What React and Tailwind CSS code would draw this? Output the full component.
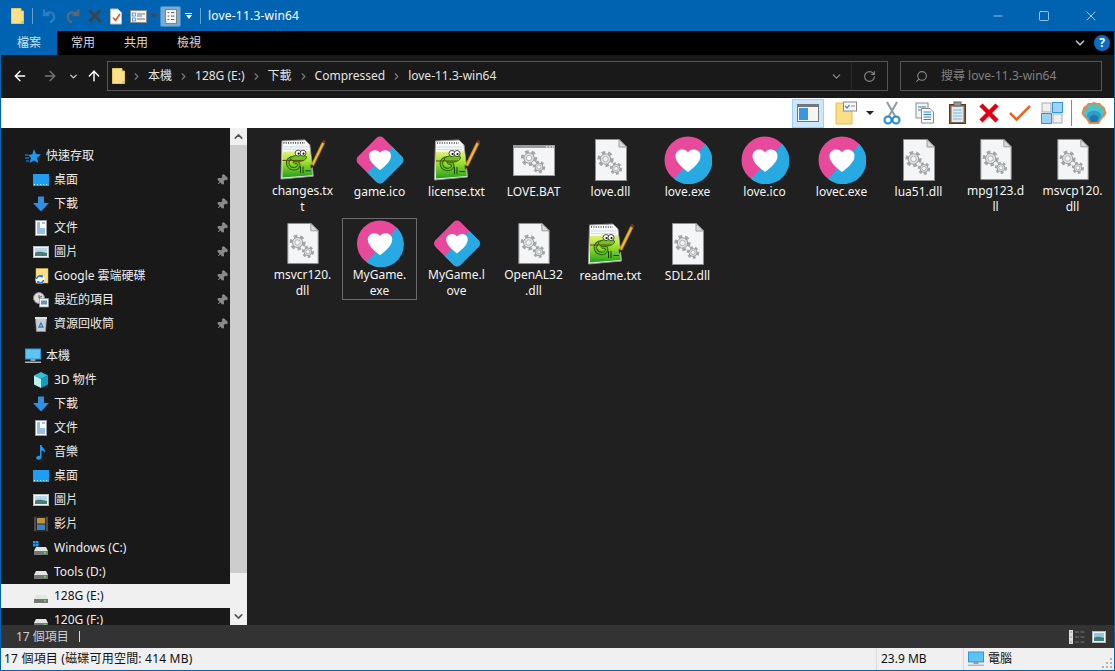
import { ArrowLeft, ArrowRight, ArrowUp, ChevronDown, ChevronRight, ChevronUp, RotateCw, Search, Minus, Square, X, Pin } from 'lucide-react';

const PINK = '#e74a9a';
const BLUE = '#27aae1';
const HEART = 'M24 36 C19 32 11.500 26.500 11.500 20 C11.500 16 14.500 13.500 18.500 13.500 C20.800 13.500 23 14.600 24 16.400 C25 14.600 27.200 13.500 29.500 13.500 C33.500 13.500 36.500 16 36.500 20 C36.500 26.500 29 32 24 36Z';

function LoveCircle() {
  return (
    <svg width="48" height="48" viewBox="0 0 48 48">
      <circle cx="24" cy="24" r="23.500" fill={PINK} />
      <path d="M41.300 8 A23.500 23.500 0 0 1 10 43 Z" fill={BLUE} />
      <path d={HEART} fill="#fff" />
    </svg>
  );
}

function LoveGem() {
  return (
    <svg width="48" height="48" viewBox="0 0 48 48">
      <g transform="rotate(45 24 24)">
        <rect x="6" y="6" width="36" height="36" rx="5" fill={PINK} />
        <path d="M24 6 H37 a5 5 0 0 1 5 5 V37 a5 5 0 0 1 -5 5 H24 Z" fill={BLUE} />
      </g>
      <path d={HEART} fill="#fff" transform="translate(24 24) scale(0.88) translate(-24 -24.500)" />
    </svg>
  );
}

function Gear({ x, y, r }) {
  return (
    <g>
      <circle cx={x} cy={y} r={r} fill="none" stroke="#a3a6a8" strokeWidth={r * 0.5} strokeDasharray={`${r * 0.55} ${r * 0.45}`} />
      <circle cx={x} cy={y} r={r * 0.8} fill="#dfe1e2" stroke="#9a9d9f" strokeWidth="1" />
      <circle cx={x} cy={y} r={r * 0.42} fill="#f4f5f6" stroke="#a3a6a8" strokeWidth="0.800" />
    </g>
  );
}

function DllIcon() {
  return (
    <svg width="48" height="48" viewBox="0 0 48 48">
      <path d="M8.500 3.500 H32 L39.500 11 V44.500 H8.500 Z" fill="#f3f5f6" stroke="#8e8e8e" />
      <path d="M32 3.500 V11 H39.500 Z" fill="#dcdcdc" stroke="#9b9b9b" />
      <Gear x={18.500} y={23} r={6.500} />
      <Gear x={29} y={32.500} r={5} />
    </svg>
  );
}

function BatIcon() {
  return (
    <svg width="48" height="48" viewBox="0 0 48 48">
      <rect x="3.500" y="9.500" width="41" height="30" fill="#f4f5f6" stroke="#9a9a9a" />
      <rect x="3" y="9" width="42" height="3" fill="#9a9a9a" />
      <rect x="36" y="10" width="1.500" height="1.500" fill="#e8e8e8" />
      <rect x="39" y="10" width="1.500" height="1.500" fill="#e8e8e8" />
      <rect x="42" y="10" width="1.500" height="1.500" fill="#e8e8e8" />
      <Gear x={19} y={22} r={6.500} />
      <Gear x={29} y={31} r={5} />
    </svg>
  );
}

function NotepadIcon() {
  return (
    <svg width="48" height="48" viewBox="0 0 48 48">
      <defs>
        <linearGradient id="npgreen" x1="0" y1="0" x2="0" y2="1">
          <stop offset="0" stopColor="#e8f27a" />
          <stop offset="0.400" stopColor="#a6e030" />
          <stop offset="1" stopColor="#22a01c" />
        </linearGradient>
      </defs>
      <path d="M2.500 5 L26 4 L31 9 L34.500 41 L1.500 44 Z" fill="#f7f9fa" stroke="#9a9a9a" />
      <path d="M4 11 H29 M4 13.500 H29" stroke="#cfdde6" strokeWidth="1" />
      <path d="M4 7 H26" stroke="#444" strokeWidth="1.600" strokeDasharray="1 1.400" />
      <path d="M3 16 L31 15 L33.800 40 L3 42.500 Z" fill="url(#npgreen)" />
      {/* chameleon: curled tail, body, eyes */}
      <path d="M16 22 C10 21 7 26 9 30 C11 34.500 18 34.500 19.500 30.500 C20.500 27.500 16.500 25.500 14.500 28" fill="none" stroke="#1c5a0c" strokeWidth="3.400" />
      <path d="M16 22 C10 21 7 26 9 30 C11 34.500 18 34.500 19.500 30.500 C20.500 27.500 16.500 25.500 14.500 28" fill="none" stroke="#6fc41c" strokeWidth="1.600" />
      <path d="M11 23 C14 19 24 18 27.500 21 C28.500 24.500 21 27.500 14 26 Z" fill="#6fc41c" stroke="#1c5a0c" strokeWidth="0.800" />
      <circle cx="19" cy="17.500" r="3" fill="#fff" stroke="#222" strokeWidth="0.800" />
      <circle cx="24" cy="17.500" r="3" fill="#fff" stroke="#222" strokeWidth="0.800" />
      <circle cx="19.500" cy="18" r="1.100" fill="#111" />
      <circle cx="24.500" cy="18" r="1.100" fill="#111" />
      <path d="M3 25 H24" stroke="#6b4a1e" strokeWidth="1.100" />
      <path d="M21.500 38 V31 M24 38 V31 M26.500 35.500 H32" stroke="#143f0a" strokeWidth="1" />
      <path d="M45 6.500 L33.500 30" stroke="#c98a13" strokeWidth="3.400" />
      <path d="M44.500 7.500 L34.200 28.800" stroke="#f7c63e" strokeWidth="1.300" />
      <path d="M46 4.500 L44.800 7" stroke="#7c2e25" strokeWidth="3" />
      <path d="M31.600 29 L35.200 30.800 L32 33.500 Z" fill="#2e2a20" />
    </svg>
  );
}

const files = [
  { lines: ['changes.tx', 't'], icon: NotepadIcon },
  { lines: ['game.ico'], icon: LoveGem },
  { lines: ['license.txt'], icon: NotepadIcon },
  { lines: ['LOVE.BAT'], icon: BatIcon },
  { lines: ['love.dll'], icon: DllIcon },
  { lines: ['love.exe'], icon: LoveCircle },
  { lines: ['love.ico'], icon: LoveCircle },
  { lines: ['lovec.exe'], icon: LoveCircle },
  { lines: ['lua51.dll'], icon: DllIcon },
  { lines: ['mpg123.d', 'll'], icon: DllIcon },
  { lines: ['msvcp120.', 'dll'], icon: DllIcon },
  { lines: ['msvcr120.', 'dll'], icon: DllIcon },
  { lines: ['MyGame.', 'exe'], icon: LoveCircle, selected: true },
  { lines: ['MyGame.l', 'ove'], icon: LoveGem },
  { lines: ['OpenAL32', '.dll'], icon: DllIcon },
  { lines: ['readme.txt'], icon: NotepadIcon },
  { lines: ['SDL2.dll'], icon: DllIcon },
];

function FolderSmall() {
  return (
    <svg width="13" height="16" viewBox="0 0 13 16">
      <path d="M0.500 0.500 H10 V3 H12.500 V15.500 H0.500 Z" fill="#fbe08a" stroke="#e8c65a" />
      <path d="M10.500 13 H12.500 V15.500 H10.500 Z" fill="#e5b945" />
    </svg>
  );
}

function DesktopIcon() {
  return (
    <svg width="16" height="16" viewBox="0 0 16 16">
      <rect x="0" y="2" width="16" height="12" fill="#1f9df0" />
      <path d="M1 12.500 H15" stroke="#dff2ff" strokeDasharray="1 2" />
    </svg>
  );
}

function DownloadIcon() {
  return (
    <svg width="16" height="16" viewBox="0 0 16 16">
      <path d="M5 0.500 H11 V7 H16 L8 15.500 L0 7 H5 Z" fill="#2f8fe6" />
    </svg>
  );
}

function DocIcon() {
  return (
    <svg width="16" height="16" viewBox="0 0 16 16">
      <rect x="2.500" y="0.500" width="11" height="15" fill="#fff" stroke="#9a9a9a" />
      <path d="M4 3 H7 M9 3 H12 M4 5 H7 M4 7 H7 M4 9 H12 M4 11 H12 M4 13 H12" stroke="#2f7fd0" />
    </svg>
  );
}

function PictureIcon() {
  return (
    <svg width="16" height="16" viewBox="0 0 16 16">
      <rect x="0.500" y="2.500" width="15" height="11" fill="#f4f4f4" stroke="#bbb" />
      <rect x="2" y="4" width="12" height="8" fill="#b5d9ee" />
      <path d="M2 9 C5 7 8 8 14 9 V12 H2 Z" fill="#4a7f76" />
    </svg>
  );
}

function DriveIcon({ windows }) {
  return (
    <svg width="16" height="16" viewBox="0 0 16 16">
      {windows && <path d="M0 1 H2.500 V3.500 H0 Z M3 1 H5.500 V3.500 H3 Z M0 4 H2.500 V6.500 H0 Z M3 4 H5.500 V6.500 H3 Z" fill="#1ba1f2" />}
      <path d="M3 7 H13 L15 11 H1 Z" fill="#e4e4e4" />
      <rect x="1" y="11" width="14" height="4" fill="#777" />
      <rect x="11" y="12" width="2" height="1.500" fill="#4fe34f" />
    </svg>
  );
}

function GoogleDriveIcon() {
  return (
    <svg width="16" height="16" viewBox="0 0 16 16">
      <path d="M3 0.500 H15 V15 H3 Z" fill="#fbdf86" stroke="#dcb94d" strokeWidth="0.500" />
      <circle cx="7" cy="11.500" r="4.500" fill="#fff" />
      <path d="M3.500 11 A3.500 3.500 0 0 1 9 8.500 M10.500 12 A3.500 3.500 0 0 1 5 14.500" fill="none" stroke="#1f73c9" strokeWidth="1.600" />
      <path d="M9.500 6.500 L10 9.500 L7 9 Z M4.500 16 L4 13 L7 13.500 Z" fill="#1f73c9" />
    </svg>
  );
}

function RecentIcon() {
  return (
    <svg width="16" height="16" viewBox="0 0 16 16">
      <circle cx="6" cy="6" r="5.500" fill="#ddd" stroke="#888" />
      <path d="M6 3 V6 L9 4" stroke="#555" fill="none" />
      <rect x="6.500" y="6.500" width="9" height="8.500" fill="#f5f5f5" stroke="#999" strokeWidth="0.700" />
      <rect x="8" y="8.500" width="6" height="4" fill="#5e9abf" />
    </svg>
  );
}

function TrashIcon() {
  return (
    <svg width="16" height="16" viewBox="0 0 16 16">
      <path d="M2.500 2.500 H13.500 L12.500 15.500 H3.500 Z" fill="#c9ced2" stroke="#8f9498" strokeWidth="0.700" />
      <rect x="2" y="1" width="12" height="2" fill="#dfe2e4" />
      <path d="M6 11 L8 7 L10 11 Z" fill="none" stroke="#2f7fd0" strokeWidth="1.300" />
    </svg>
  );
}

function MonitorIcon() {
  return (
    <svg width="16" height="16" viewBox="0 0 16 16">
      <rect x="0.500" y="1" width="15" height="10" fill="#5cc4f5" stroke="#2f97dd" />
      <rect x="5.500" y="11" width="5" height="2" fill="#9a9a9a" />
      <rect x="0" y="13.500" width="16" height="1.500" fill="#b5b5b5" />
    </svg>
  );
}

function CubeIcon() {
  return (
    <svg width="16" height="16" viewBox="0 0 16 16">
      <path d="M8 0 L15 3.500 L8 7 L1 3.500 Z" fill="#2fc0d6" />
      <path d="M1 3.500 L8 7 V16 L1 12.500 Z" fill="#bdf0f5" />
      <path d="M15 3.500 L8 7 V16 L15 12.500 Z" fill="#0f9fc0" />
    </svg>
  );
}

function MusicIcon() {
  return (
    <svg width="16" height="16" viewBox="0 0 16 16">
      <path d="M7 1 H8.500 C9 4 13 5 12 9 C11.500 7.500 10 6.500 8.500 6.500 V13 C8.500 15 6 16 4.500 15.500 C2.500 15 3 12.500 5 12 C5.700 11.800 6.500 11.800 7 12 Z" fill="#1e9bf0" />
    </svg>
  );
}

function VideoIcon() {
  return (
    <svg width="16" height="16" viewBox="0 0 16 16">
      <rect x="1" y="0.500" width="14" height="15" fill="#2c2c2c" />
      <path d="M2 1.500 V14.500 M14 1.500 V14.500" stroke="#999" strokeWidth="1.200" strokeDasharray="1 1" />
      <rect x="4" y="2" width="8" height="5.500" fill="#c0933a" />
      <rect x="4" y="8.500" width="8" height="5.500" fill="#3a86c0" />
    </svg>
  );
}

function StarIcon() {
  return (
    <svg width="16" height="16" viewBox="0 0 16 16">
      <path d="M9 1 L11 6 L16 6.500 L12 10 L13.500 15 L9 12.500 L4.500 15 L6 10 L3 7 L7.300 6.300 Z" fill="#1e9bf0" />
      <path d="M0 7 H3 M0 10 H4 M1 13 H4" stroke="#1e9bf0" />
    </svg>
  );
}

function Row({ icon: Icon, label, pinned, selected, top }) {
  return (
    <div className={`flex h-6 shrink-0 items-center ${top ? 'pl-[24px]' : 'pl-[32px]'} ${selected ? 'bg-[#f0f0f0] text-[#111]' : 'text-[#ededed]'}`}>
      <span className="mr-[5px] flex h-4 w-4 shrink-0 items-center justify-center">
        <Icon />
      </span>
      <span className="flex-1 whitespace-nowrap">{label}</span>
      {pinned && <Pin size={12} className="mr-[2px] rotate-45 fill-[#8a8a8a] text-[#8a8a8a]" />}
    </div>
  );
}

function Sidebar() {
  return (
    <div className="flex h-full w-[229px] shrink-0 flex-col overflow-hidden bg-[#191919] pt-[16px]">
      <Row top icon={StarIcon} label="快速存取" />
      <Row pinned icon={DesktopIcon} label="桌面" />
      <Row pinned icon={DownloadIcon} label="下載" />
      <Row pinned icon={DocIcon} label="文件" />
      <Row pinned icon={PictureIcon} label="圖片" />
      <Row pinned icon={GoogleDriveIcon} label="Google 雲端硬碟" />
      <Row pinned icon={RecentIcon} label="最近的項目" />
      <Row pinned icon={TrashIcon} label="資源回收筒" />
      <div className="h-2 shrink-0" />
      <Row top icon={MonitorIcon} label="本機" />
      <Row icon={CubeIcon} label="3D 物件" />
      <Row icon={DownloadIcon} label="下載" />
      <Row icon={DocIcon} label="文件" />
      <Row icon={MusicIcon} label="音樂" />
      <Row icon={DesktopIcon} label="桌面" />
      <Row icon={PictureIcon} label="圖片" />
      <Row icon={VideoIcon} label="影片" />
      <Row icon={() => <DriveIcon windows />} label="Windows (C:)" />
      <Row icon={DriveIcon} label="Tools (D:)" />
      <Row selected icon={DriveIcon} label="128G (E:)" />
      <Row icon={DriveIcon} label="120G (F:)" />
    </div>
  );
}

function Scrollbar() {
  return (
    <div className="flex h-full w-[17px] shrink-0 flex-col bg-[#f0f0f0]">
      <div className="flex h-[17px] shrink-0 items-center justify-center">
        <ChevronUp size={13} strokeWidth={3} className="text-[#555]" />
      </div>
      <div className="h-[428px] shrink-0 bg-[#cdcdcd]" />
      <div className="flex-1" />
      <div className="flex h-[17px] shrink-0 items-center justify-center">
        <ChevronDown size={13} strokeWidth={3} className="text-[#555]" />
      </div>
    </div>
  );
}

function FileItem({ file }) {
  const Icon = file.icon;
  return (
    <div className={`flex h-[82px] w-[75px] flex-col items-center border pt-px ${file.selected ? 'border-[#6b6b6b]' : 'border-transparent'}`}>
      <Icon />
      <div className="text-center leading-[16px] text-[#f4f4f4]">
        {file.lines.map((line) => (
          <div key={line} className="whitespace-nowrap">{line}</div>
        ))}
      </div>
    </div>
  );
}

function QatIcons() {
  return (
    <div className="flex items-center">
      <span className="ml-[10px] flex"><FolderSmall /></span>
      <span className="ml-[8px] h-4 w-px bg-[#6b9fcc]" />
      {/* undo, redo */}
      <svg className="ml-[8px]" width="16" height="16" viewBox="0 0 16 16" fill="none" stroke="#2a7cc0" strokeWidth="2.400">
        <path d="M3 1.500 V7 H8.500 M3.500 6.500 C6 3.500 12 3.500 13 7.500 C13.500 10 12 13 9 14.500" />
      </svg>
      <svg className="ml-[8px]" width="16" height="16" viewBox="0 0 16 16" fill="none" stroke="#5c6670" strokeWidth="2.400">
        <path d="M13 1.500 V7 H7.500 M12.500 6.500 C10 3.500 4 3.500 3 7.500 C2.500 10 4 13 7 14.500" />
      </svg>
      <svg className="ml-[6px]" width="16" height="16" viewBox="0 0 16 16" stroke="#3b4248" strokeWidth="3">
        <path d="M2.500 2.500 L13.500 13.500 M13.500 2.500 L2.500 13.500" />
      </svg>
      <svg className="ml-[6px]" width="14" height="17" viewBox="0 0 14 17">
        <path d="M1.500 1 H9 L12.500 4.500 V16 H1.500 Z" fill="#fdfdfd" stroke="#b9b9b9" />
        <path d="M4 9.500 L6.500 12.500 L11 6" fill="none" stroke="#e2501f" strokeWidth="1.500" />
      </svg>
      <svg className="ml-[7px]" width="17" height="13" viewBox="0 0 17 13">
        <rect x="0.500" y="0.500" width="16" height="12" fill="#eef2f5" stroke="#8c8c8c" />
        <rect x="2.500" y="3" width="3" height="3" fill="#fff" stroke="#2f7fd0" strokeWidth="0.700" />
        <rect x="2.500" y="8" width="3" height="3" fill="#fff" stroke="#2f7fd0" strokeWidth="0.700" />
        <path d="M7 4 H15 M7 6 H12 M7 9 H15" stroke="#777" />
      </svg>
      <span className="ml-[4px] h-0 w-0 border-x-[3.500px] border-t-[4px] border-x-transparent border-t-[#444]" />
      <span className="ml-[3px] flex h-[21px] w-[21px] items-center justify-center rounded-[2px] border border-[#3d8cc4] bg-[#7aa9d1]">
        <svg width="12" height="15" viewBox="0 0 14 17">
          <rect x="0.500" y="0.500" width="13" height="16" fill="#f7f7f7" stroke="#777" />
          <path d="M3 4 H5 M7 4 H11 M3 8 H5 M7 8 H11 M3 12 H5 M7 12 H11" stroke="#444" />
        </svg>
      </span>
      <span className="ml-[4px] flex flex-col items-center">
        <span className="mb-px h-px w-[7px] bg-white" />
        <span className="h-0 w-0 border-x-[3.500px] border-t-[4px] border-x-transparent border-t-white" />
      </span>
      <span className="ml-[8px] h-4 w-px bg-[#6b9fcc]" />
    </div>
  );
}

function TitleBar() {
  return (
    <div className="flex h-[30px] shrink-0 items-center bg-[#0063b1] text-white">
      <QatIcons />
      <span className="ml-[7px] whitespace-nowrap tracking-[0.2px]">love-11.3-win64</span>
      <div className="ml-auto flex h-full items-center">
        <span className="flex w-[47px] justify-center"><Minus size={14} strokeWidth={1} /></span>
        <span className="flex w-[45px] justify-center"><Square size={12} strokeWidth={1.200} /></span>
        <span className="ml-[2px] mr-[1px] flex w-[45px] justify-center"><X size={16} strokeWidth={1} /></span>
      </div>
    </div>
  );
}

function RibbonTabs() {
  return (
    <div className="flex h-[24px] shrink-0 items-center bg-black text-[#d8d8d8]">
      <span className="flex h-full w-[56px] items-center justify-center bg-[#0063b1] text-[#cfe3f5]">檔案</span>
      <span className="ml-[14px]">常用</span>
      <span className="ml-[29px]">共用</span>
      <span className="ml-[29px]">檢視</span>
      <ChevronDown size={14} strokeWidth={3} className="ml-auto text-[#c0c0c0]" />
      <span className="ml-[7px] mr-[4px] flex h-4 w-4 items-center justify-center rounded-full bg-[#0a6cc2] text-[12px] font-bold text-white">?</span>
    </div>
  );
}

function Crumb({ label }) {
  return (
    <>
      <ChevronRight size={11} strokeWidth={2.500} className="mx-[6px] text-[#7a7a7a]" />
      <span className="whitespace-nowrap">{label}</span>
    </>
  );
}

function AddressBar() {
  return (
    <div className="flex h-[43px] shrink-0 items-center bg-[#191919] pb-px">
      <ArrowLeft size={16} strokeWidth={2} className="ml-[11px] text-white" />
      <ArrowRight size={16} strokeWidth={2} className="ml-[14px] text-[#777]" />
      <ChevronDown size={11} strokeWidth={3} className="ml-[10px] text-[#ccc]" />
      <ArrowUp size={16} strokeWidth={2.200} className="ml-[7px] text-white" />
      <div className="ml-[5px] flex h-[30px] w-[781px] items-center border border-[#555] text-[#e2e2e2]">
        <span className="ml-[4px] flex"><FolderSmall /></span>
        <Crumb label="本機" />
        <Crumb label="128G (E:)" />
        <Crumb label="下載" />
        <Crumb label="Compressed" />
        <Crumb label="love-11.3-win64" />
        <ChevronDown size={13} strokeWidth={2.500} className="ml-auto text-[#888]" />
        <span className="ml-[8px] h-full w-px bg-[#2a2a2a]" />
        <RotateCw size={13} strokeWidth={2} className="mx-[11px] text-[#888]" />
      </div>
      <div className="ml-[12px] flex h-[30px] w-[202px] items-center border border-[#555] text-[#808080]">
        <Search size={13} className="ml-[14px] -scale-x-100 text-[#888]" />
        <span className="ml-[13px] whitespace-nowrap">搜尋 love-11.3-win64</span>
      </div>
    </div>
  );
}

function Toolbar() {
  return (
    <div className="flex h-[30px] shrink-0 items-center justify-end bg-white">
      <span className="flex h-[29px] w-[32px] items-center justify-center border border-[#99d1ff] bg-[#cce8ff]">
        <svg width="22" height="18" viewBox="0 0 22 18">
          <rect x="0.500" y="0.500" width="21" height="17" fill="#f5f5f5" stroke="#777" />
          <rect x="0" y="0" width="22" height="3" fill="#777" />
          <rect x="2" y="4" width="9" height="12" fill="#3a96dd" />
        </svg>
      </span>
      <svg className="ml-[11px]" width="22" height="24" viewBox="0 0 22 24">
        <path d="M1 2 H12 V6 H17 V23 H1 Z" fill="#fbdf86" stroke="#e2bf52" />
        <rect x="8.500" y="1" width="13" height="9" fill="#f7f7f7" stroke="#888" />
        <path d="M10 5 L12 7 L14.500 4" fill="none" stroke="#2f8fe6" strokeWidth="1.200" />
        <path d="M16 5 H20" stroke="#888" />
      </svg>
      <span className="ml-[9px] h-0 w-0 border-x-[4px] border-t-[4px] border-x-transparent border-t-[#222]" />
      <svg className="ml-[9px]" width="18" height="24" viewBox="0 0 18 24" fill="none">
        <path d="M4 1 L12 15 M14 1 L6 15" stroke="#8d9aa3" strokeWidth="2" />
        <circle cx="5" cy="19" r="3.500" stroke="#1e88dd" strokeWidth="2" />
        <circle cx="13" cy="19" r="3.500" stroke="#1e88dd" strokeWidth="2" />
      </svg>
      <svg className="ml-[14px]" width="20" height="22" viewBox="0 0 20 22">
        <rect x="1" y="1" width="12" height="15" fill="#f4f4f4" stroke="#8c8c8c" />
        <path d="M3 5 H11 M3 8 H11" stroke="#2f7fd0" />
        <path d="M6.500 6.500 H15 L18.500 10 V21 H6.500 Z" fill="#fff" stroke="#8c8c8c" />
        <path d="M8.500 10 H16 M8.500 12.500 H16 M8.500 15 H16 M8.500 17.500 H16" stroke="#2f7fd0" />
      </svg>
      <svg className="ml-[13px]" width="20" height="24" viewBox="0 0 20 24">
        <rect x="1.500" y="3.500" width="16" height="19" fill="#8a5c3a" stroke="#5b3a22" />
        <rect x="3.500" y="5.500" width="12" height="15.500" fill="#d9ecf8" />
        <path d="M5 9 H14 M5 12 H14 M5 15 H14 M5 18 H14" stroke="#8fb9d6" />
        <rect x="6" y="1" width="7" height="4" fill="#999" stroke="#666" />
      </svg>
      <svg className="ml-[11px]" width="20" height="20" viewBox="0 0 20 20" stroke="#e20010" strokeWidth="4.500">
        <path d="M2 2 L18 18 M18 2 L2 18" />
      </svg>
      <svg className="ml-[10px]" width="22" height="18" viewBox="0 0 22 18" fill="none" stroke="#f0641e" strokeWidth="2.600">
        <path d="M1 9 L7.500 15.500 L21 2" />
      </svg>
      <svg className="ml-[10px]" width="22" height="22" viewBox="0 0 22 22">
        <rect x="1" y="1" width="9" height="9" fill="#f0f0f0" stroke="#aaa" />
        <rect x="11.500" y="0.500" width="10" height="10" fill="#9fd2f7" stroke="#2f97dd" />
        <rect x="0.500" y="11.500" width="10" height="10" fill="#9fd2f7" stroke="#2f97dd" />
        <rect x="12" y="12" width="9" height="9" fill="#f0f0f0" stroke="#aaa" />
      </svg>
      <span className="ml-[8px] h-[26px] w-px bg-[#888]" />
      <svg className="ml-[9px] mr-[7px]" width="26" height="24" viewBox="0 0 26 24">
        <path d="M13 1 L16 2 L19 2 L21 4.500 L23.500 6 L24.500 9 L25.500 12 L24 15 L21 18 L19 21 L18 23 H8 L7 21 L5 18 L2 15 L0.500 12 L1.500 9 L2.500 6 L5 4.500 L7 2 L10 2 Z" fill="#ee8440" />
        <path d="M13 3 C6.500 3 2.500 8 3 12.500 C5 16 7 18.500 9 21 H17 C19 18.500 21 16 23 12.500 C23.500 8 19.500 3 13 3Z" fill="#44c6d6" />
        <path d="M5.500 15 C7 8 19 8 20.500 15 C19 18 17.500 20 16.500 21 H9.500 C8.500 20 7 18 5.500 15Z" fill="#2f9fc8" />
        <path d="M8.500 17 C10 12.500 16 12.500 17.500 17 L16 21 H10 Z" fill="#1f78b0" />
        <path d="M5 6 L6.500 9 M13 3.500 V7 M21 6 L19.500 9" stroke="#ee8440" strokeWidth="1.500" />
      </svg>
    </div>
  );
}

function DarkStatus() {
  return (
    <div className="flex h-[23px] shrink-0 items-center bg-[#333] text-[#cfcfcf]">
      <span className="ml-[15px] whitespace-nowrap">17 個項目</span>
      <span className="ml-[10px] h-[11px] w-px bg-[#ddd]" />
      <svg className="ml-auto" width="16" height="14" viewBox="0 0 16 14">
        <rect x="0" y="0" width="4" height="14" fill="#ddd" />
        <path d="M1.500 2 H2.500 M1.500 7 H2.500 M1.500 12 H2.500" stroke="#444" />
        <path d="M6 2 H10 M11.500 2 H15.500 M6 7 H10 M11.500 7 H15.500 M6 12 H10 M11.500 12 H15.500" stroke="#777" />
      </svg>
      <svg className="ml-[7px] mr-[8px]" width="14" height="12" viewBox="0 0 14 12">
        <rect x="0.500" y="0.500" width="13" height="11" fill="#f2f2f2" stroke="#bbb" />
        <rect x="2" y="2" width="10" height="8" fill="#8fc7e6" />
        <path d="M2 7 C5 5 8 6 12 7 V10 H2 Z" fill="#3e7f76" />
      </svg>
    </div>
  );
}

function BottomBar() {
  return (
    <div className="flex h-[22px] shrink-0 items-center bg-[#f0f0f0] text-[#111]">
      <span className="ml-[3px] w-[872px] whitespace-nowrap tracking-[0.2px]">17 個項目 (磁碟可用空間: 414 MB)</span>
      <span className="h-full w-px bg-[#d9d9d9]" />
      <span className="ml-[4px] w-[82px] whitespace-nowrap">23.9 MB</span>
      <span className="h-full w-px bg-[#d9d9d9]" />
      <span className="ml-[4px] mr-[4px] flex"><MonitorIcon /></span>
      <span>電腦</span>
      <svg className="ml-auto mt-[10px]" width="12" height="12" viewBox="0 0 12 12" fill="#b5b5b5">
        <path d="M8 0 h2 v2 h-2 Z M4 4 h2 v2 h-2 Z M8 4 h2 v2 h-2 Z M0 8 h2 v2 h-2 Z M4 8 h2 v2 h-2 Z M8 8 h2 v2 h-2 Z" />
      </svg>
    </div>
  );
}

export default function App() {
  return (
    <div className="flex h-[671px] w-[1115px] flex-col overflow-hidden border border-[#0063b1] bg-[#202020] font-['Noto_Sans','Noto_Sans_CJK_TC',sans-serif] text-[12px]">
      <TitleBar />
      <RibbonTabs />
      <AddressBar />
      <Toolbar />
      <div className="flex min-h-0 flex-1">
        <Sidebar />
        <Scrollbar />
        <div className="flex-1 bg-[#202020] pl-[18px] pt-[6px]">
          <div className="grid grid-cols-[repeat(11,75px)] gap-[2px]">
            {files.map((file) => (
              <FileItem key={file.lines.join('')} file={file} />
            ))}
          </div>
        </div>
      </div>
      <DarkStatus />
      <BottomBar />
    </div>
  );
}
